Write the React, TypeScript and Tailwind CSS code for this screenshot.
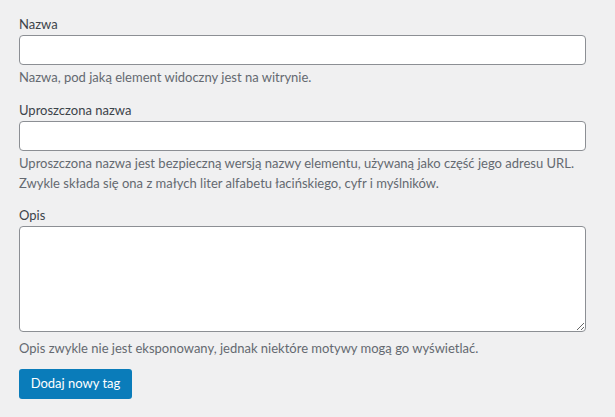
import React from 'react';

function App() {
  return (
    <div className="min-h-screen bg-[#f0f0f1] px-[19px] pt-[14px] text-[13px] text-[#3c434a] [font-family:Lato,'Liberation_Sans',sans-serif]">
      {/* Nazwa */}
      <div>
        <label className="block leading-[20px]">Nazwa</label>
        <input
          type="text"
          className="mt-[1px] block h-[30px] w-[567px] rounded-[4px] border border-[#8c8f94] bg-white px-2 outline-none"
        />
        <p className="mt-[2px] leading-[20px] text-[#646970]">Nazwa, pod jaką element widoczny jest na witrynie.</p>
      </div>

      {/* Uproszczona nazwa */}
      <div className="mt-[13px]">
        <label className="block leading-[20px]">Uproszczona nazwa</label>
        <input
          type="text"
          className="mt-[1px] block h-[30px] w-[567px] rounded-[4px] border border-[#8c8f94] bg-white px-2 outline-none"
        />
        <p className="mt-[2px] leading-[20px] text-[#646970]">
          Uproszczona nazwa jest bezpieczną wersją nazwy elementu, używaną jako część jego adresu URL.
          <br />
          Zwykle składa się ona z małych liter alfabetu łacińskiego, cyfr i myślników.
        </p>
      </div>

      {/* Opis */}
      <div className="mt-[12px]">
        <label className="block leading-[20px]">Opis</label>
        <textarea className="mt-[1px] block h-[106px] w-[567px] resize rounded-[4px] border border-[#8c8f94] bg-white p-2 outline-none" />
        <p className="mt-[6px] leading-[20px] text-[#646970]">
          Opis zwykle nie jest eksponowany, jednak niektóre motywy mogą go wyświetlać.
        </p>
      </div>

      <button className="mt-[11px] h-[30px] w-[113px] rounded-[3px] bg-[#0a7cba] text-[13px] text-white">
        Dodaj nowy tag
      </button>
    </div>
  );
}

export default App;
